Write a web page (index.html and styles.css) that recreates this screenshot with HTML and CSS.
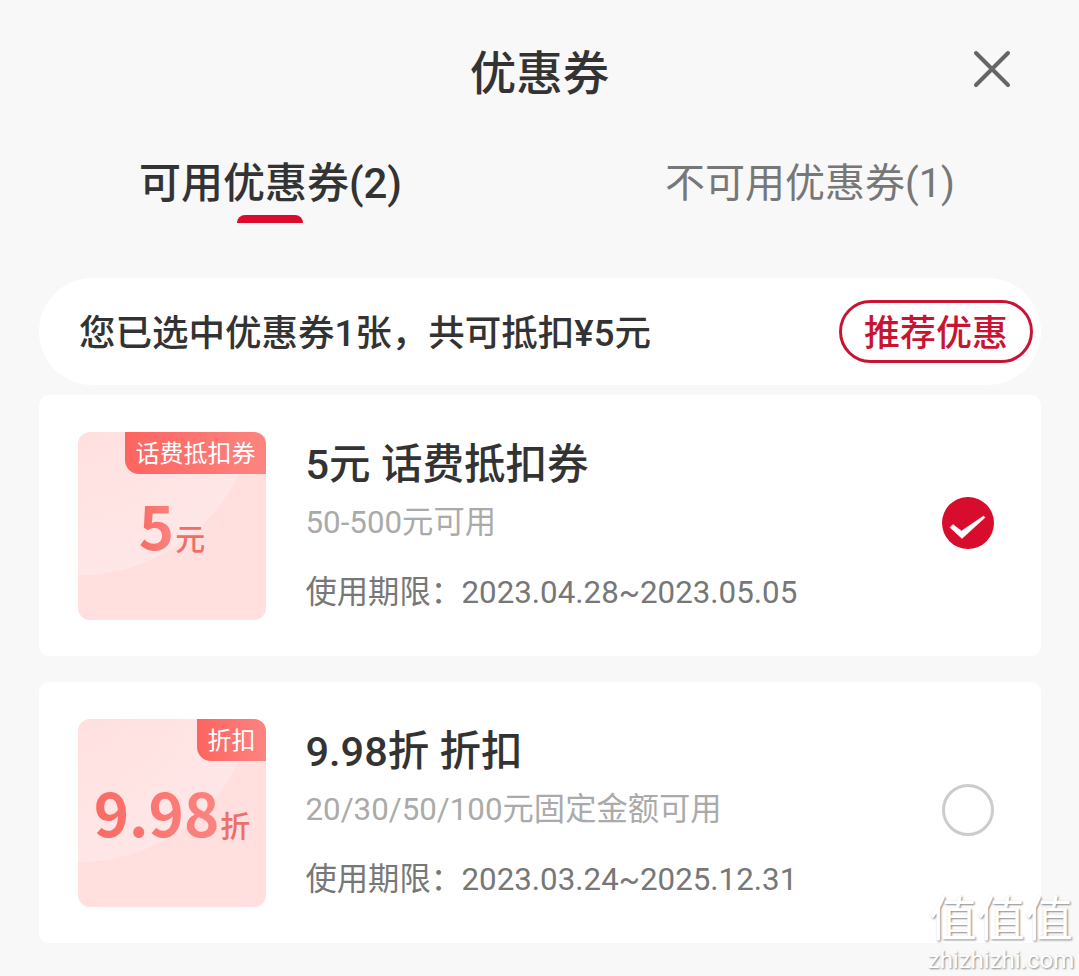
FILE: index.html
```html
<!DOCTYPE html>
<html lang="zh-CN">
   <head>
      <meta charset="UTF-8">
      <title>优惠券</title>
      <link rel="stylesheet" href="styles.css">
   </head>
   <body>
      <header class="top">
         <h1 class="title">优惠券</h1>
         <svg class="close" width="40" height="40" viewBox="0 0 40 40">
            <path d="M4 4L36 36M36 4L4 36" stroke="#666" stroke-width="4" stroke-linecap="round" fill="none"/>
         </svg>
      </header>

      <nav class="tabs">
         <a class="tab active">可用优惠券(2)</a>
         <a class="tab">不可用优惠券(1)</a>
      </nav>

      <div class="summary">
         <span class="summary-text">您已选中优惠券1张，共可抵扣¥5元</span>
         <button class="recommend">推荐优惠</button>
      </div>

      <div class="list">
         <div class="card">
            <div class="thumb">
               <span class="tag">话费抵扣券</span>
               <div class="amount"><b>5</b><span>元</span></div>
            </div>
            <div class="info">
               <div class="name">5元 话费抵扣券</div>
               <div class="rule">50-500元可用</div>
               <div class="date"><span class="date-label">使用期限：</span>2023.04.28~2023.05.05</div>
            </div>
            <svg class="check" width="52" height="52" viewBox="0 0 52 52">
               <circle cx="26" cy="26" r="26" fill="#d80c2d"/>
               <path d="M8 30.500L11 27.500L19.500 34L41.500 19L43 20.500L20 41.500Z" fill="#fff" stroke="#fff" stroke-width="0.500" stroke-linejoin="round"/>
            </svg>
         </div>

         <div class="card card-second">
            <div class="thumb">
               <span class="tag">折扣</span>
               <div class="amount"><b>9.98</b><span>折</span></div>
            </div>
            <div class="info">
               <div class="name">9.98折 折扣</div>
               <div class="rule">20/30/50/100元固定金额可用</div>
               <div class="date"><span class="date-label">使用期限：</span>2023.03.24~2025.12.31</div>
            </div>
            <div class="radio"></div>
         </div>
      </div>

      <div class="watermark">
         <div class="wm-big">值值值</div>
         <div class="wm-small">zhizhizhi.com</div>
      </div>
   </body>
</html>
```

FILE: styles.css
```css
/* page */
body {
  margin: 0;
  padding: 0;
  height: 976px;
  overflow: hidden;
  position: relative;
  background-color: #f8f8f8;
  color: #333;
  font-family: Roboto, "Noto Sans CJK SC", sans-serif;
}

/* header */
.top {
  height: 146px;
  display: flex;
  justify-content: center;
  position: relative;
}
.title {
  margin: 0;
  padding-top: 41px;
  font-size: 46.500px;
  line-height: 66px;
  font-weight: 500;
  height: 66px;
}
.close {
  position: absolute;
  left: 972px;
  top: 49px;
}

/* tabs */
.tabs {
  height: 132px;
  display: grid;
  grid-template-columns: 541px 538px;
}
.tab {
  display: block;
  height: 76px;
  line-height: 76px;
  font-size: 40px;
  text-align: center;
  color: #777;
  position: relative;
}
.tab.active {
  color: #333;
  font-size: 42px;
  font-weight: 500;
}
.tab.active::after {
  content: "";
  position: absolute;
  left: 237px;
  top: 69px;
  width: 66px;
  height: 8px;
  border-radius: 8px 8px 0 0;
  background-color: #dc0a2d;
}

/* selected summary */
.summary {
  margin: 0 38px 0 39px;
  height: 107px;
  border-radius: 54px;
  background-color: #fff;
  display: flex;
  align-items: center;
  justify-content: space-between;
  padding-left: 40px;
}
.summary-text {
  font-size: 36.500px;
  font-weight: 500;
  padding-bottom: 2px;
}
.recommend {
  width: 194px;
  height: 63px;
  padding: 0 0 3px;
  border: 3px solid #c81432;
  border-radius: 32px;
  background-color: #fff;
  color: #c81432;
  font-family: inherit;
  font-size: 36px;
  font-weight: 500;
  box-sizing: border-box;
  margin-right: 8px;
}

/* coupon cards */
.list {
  margin: 10px 38px 0 39px;
}
.card {
  height: 261px;
  box-sizing: border-box;
  padding: 37px 47px 0 39px;
  background-color: #fff;
  border-radius: 10px;
  display: flex;
}
.card-second {
  margin-top: 26px;
}
.thumb {
  width: 188px;
  height: 188px;
  flex-shrink: 0;
  border-radius: 12px;
  position: relative;
  overflow: hidden;
  background: radial-gradient(circle at 0 -35px, #ffdede 0, #ffe7e7 178px, #ffe0df 178.500px, #ffe0df 100%);
  display: flex;
  align-items: center;
  justify-content: center;
}
.tag {
  position: absolute;
  top: 0;
  right: 0;
  height: 42px;
  line-height: 44px;
  padding: 0 10.500px;
  font-size: 24px;
  color: #fff;
  border-radius: 0 0 0 14px;
  background: linear-gradient(90deg, #fd645f, #fd8480);
}
.amount {
  color: #ec7069;
  white-space: nowrap;
  display: flex;
  align-items: baseline;
  padding-bottom: 4px;
}
.amount b {
  font-family: "Noto Sans CJK SC", sans-serif;
  font-size: 60px;
  line-height: 84px;
  font-weight: 700;
  background: linear-gradient(90deg, #fa6a63, #fb8480);
  -webkit-background-clip: text;
  background-clip: text;
  color: transparent;
}
.amount span {
  font-size: 30px;
  font-weight: 500;
  margin-left: 1px;
}
.info {
  flex: 1;
  margin-left: 39.500px;
}
.name {
  font-size: 41.500px;
  line-height: 54px;
  margin-top: 6px;
  font-weight: 500;
}
.rule {
  font-size: 31.300px;
  line-height: 44px;
  margin-top: 9px;
  color: #aaa;
}
.date {
  font-size: 31.300px;
  line-height: 44px;
  margin-top: 26px;
  color: #777;
  white-space: nowrap;
}
.date-label {
  display: inline-block;
  width: 156px;
}
.check {
  margin-top: 65px;
}
.radio {
  width: 52px;
  height: 52px;
  margin-top: 65px;
  box-sizing: border-box;
  border: 3px solid #ccc;
  border-radius: 50%;
}

/* watermark lies over the page */
.watermark {
  position: absolute;
  left: 927px;
  top: 893px;
  width: 148px;
  text-align: center;
  color: #fff;
  text-shadow: 1px 1px 2px #888;
}
.wm-big {
  font-size: 48px;
  line-height: 54px;
}
.wm-small {
  font-size: 24px;
  line-height: 26px;
}
```
